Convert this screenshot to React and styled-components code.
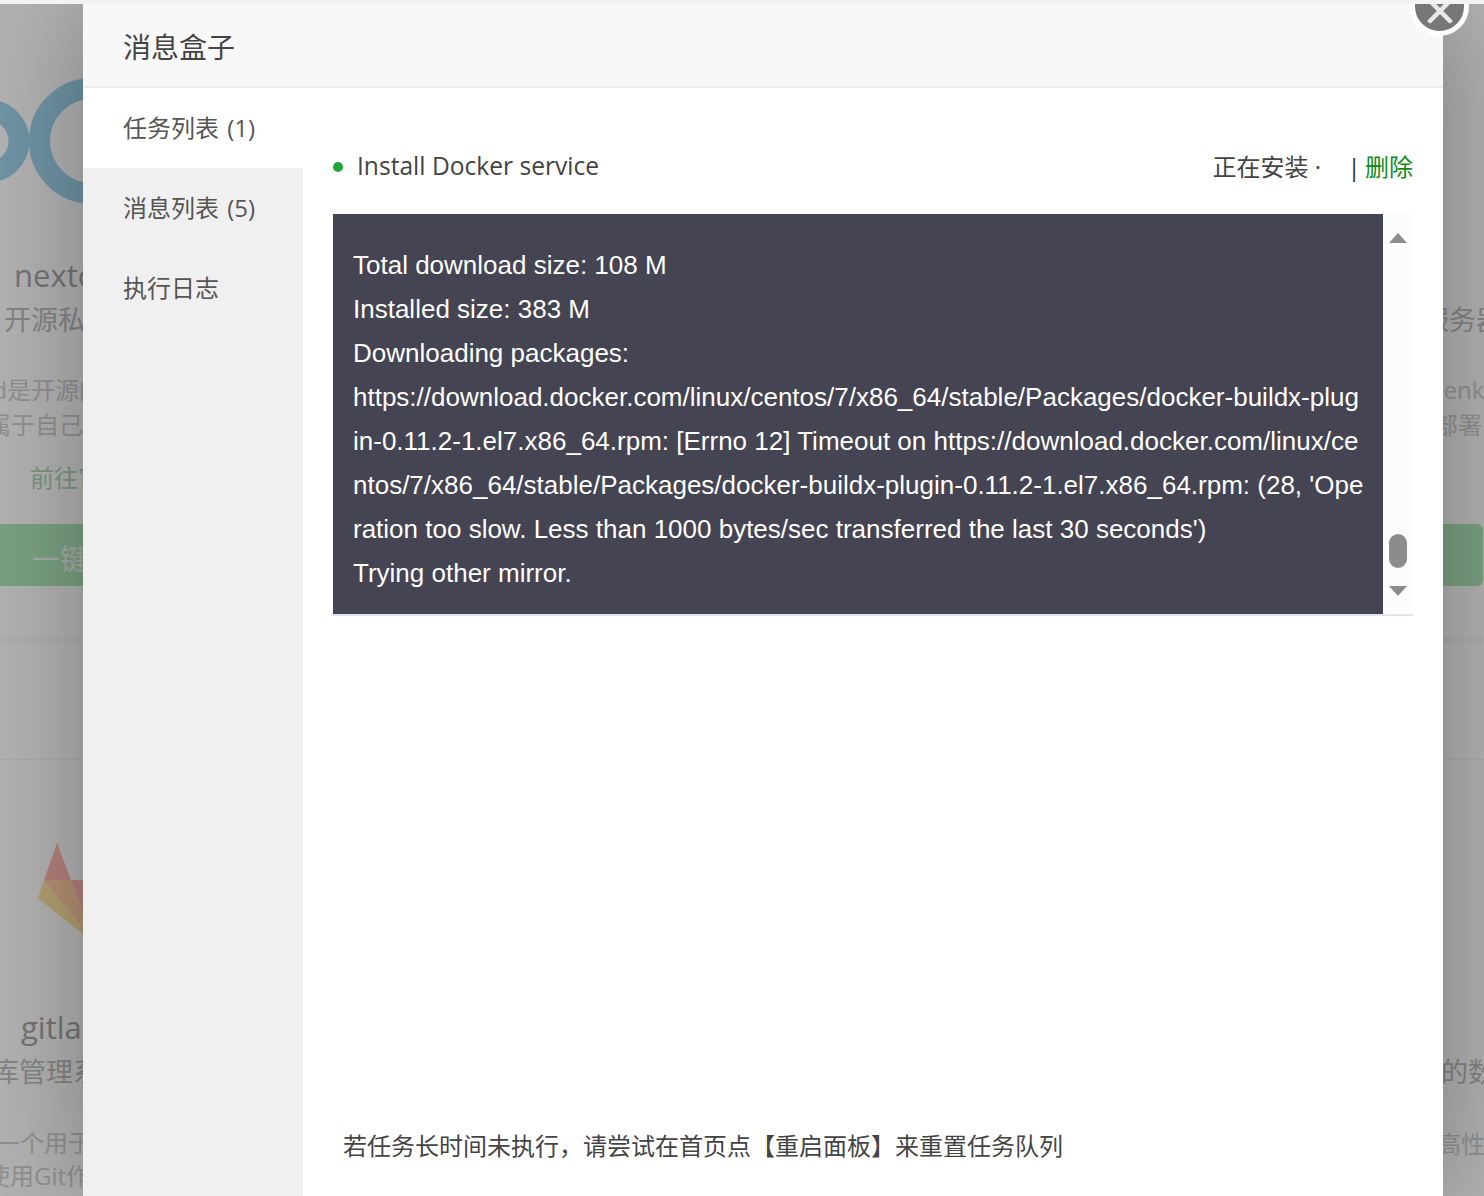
import React from "react";
import styled, { createGlobalStyle } from "styled-components";

const SANS = `"Open Sans", "Noto Sans CJK SC", sans-serif`;

const GlobalStyle = createGlobalStyle`
  html, body {
    margin: 0;
    height: 100%;
    overflow: hidden;
    background: #f3f3f3;
    font-family: ${SANS};
  }
`;

const Page = styled.div`
  height: 1196px;
  padding-top: 4px;
  box-sizing: border-box;
`;

const Stage = styled.div`
  position: relative;
  height: 1192px;
  overflow: hidden;
  background: #fff;
`;

// the software store page behind the dialog
const Store = styled.div`
  display: flex;
  justify-content: space-between;
  padding-right: 1px;
`;

const Column = styled.div`
  width: 400px;
`;

const Card = styled.div`
  height: ${(p) => p.$height}px;
  padding-top: ${(p) => p.$top}px;
  box-sizing: border-box;
`;

const Logo = styled.svg`
  display: block;
  width: 200px;
  height: ${(p) => p.$height}px;
`;

const Line = styled.div`
  margin-top: ${(p) => p.$gap || 0}px;
  margin-left: ${(p) => p.$x || 0}px;
  white-space: nowrap;
`;

const Name = styled(Line)`
  font-size: 31px;
  line-height: 40px;
  color: #a6a6a6;
`;

const Sub = styled(Line)`
  font-size: 27px;
  line-height: 44px;
  color: #bdbdbd;
`;

const Desc = styled(Line)`
  font-size: 24px;
  line-height: 35px;
  color: #cfcfcf;
`;

const GoLink = styled(Line)`
  font-size: 24px;
  line-height: 36px;
  color: #b3d6b8;
`;

const InstallButton = styled.div`
  height: 58px;
  margin-top: ${(p) => p.$gap}px;
  margin-left: ${(p) => p.$bleed || 0}px;
  padding: 4px 0 0 ${(p) => 32 - (p.$bleed || 0)}px;
  border-radius: 6px;
  background: #afe6b9;
  color: #f0f5f0;
  font-size: 28px;
  line-height: 62px;
`;

const Band = styled.div`
  height: 8px;
  margin-top: 50px;
  background: #fafafa;
`;

const Rule = styled.div`
  height: 1px;
  margin-top: 114px;
  background: #f4f4f4;
`;

const Shade = styled.div`
  position: absolute;
  inset: 0;
  background: rgba(0, 0, 0, 0.3);
`;

// dialog
const Dialog = styled.div`
  position: absolute;
  top: 0;
  left: 83px;
  width: 1360px;
  height: 1192px;
  display: flex;
  flex-direction: column;
  background: #fff;
  box-shadow: 1px 1px 100px rgba(0, 0, 0, 0.3);
`;

const DialogTitle = styled.div`
  flex: none;
  height: 82px;
  padding-left: 40px;
  background: #f8f8f8;
  border-bottom: 2px solid #eeeeee;
  color: #444;
  font-size: 28px;
  line-height: 86px;
`;

const CloseButton = styled.button`
  position: absolute;
  top: -27px;
  right: -26px;
  width: 59px;
  height: 59px;
  padding: 0;
  display: flex;
  align-items: center;
  justify-content: center;
  border: 5px solid #fff;
  border-radius: 50%;
  box-sizing: border-box;
  background: #777;
  svg {
    width: 30px;
    height: 30px;
    margin-top: 8px;
  }
`;

const DialogBody = styled.div`
  flex: 1;
  display: flex;
  min-height: 0;
`;

const Sidebar = styled.div`
  flex: none;
  width: 220px;
  background: #f0f0f0;
`;

const Tab = styled.div`
  height: 80px;
  padding-left: 40px;
  background: ${(p) => (p.$active ? "#fff" : "transparent")};
  color: #555;
  font-size: 24px;
  line-height: 80px;
  word-spacing: 2px;
`;

const Content = styled.div`
  flex: 1;
  display: flex;
  flex-direction: column;
  padding: 60px 30px 32px;
  min-width: 0;
`;

const TaskRow = styled.div`
  display: flex;
  align-items: center;
  height: 38px;
  color: #444;
`;

const Dot = styled.span`
  width: 10px;
  height: 10px;
  margin: 0 14px 0 0;
  border-radius: 50%;
  background: #20a53a;
`;

const TaskName = styled.span`
  flex: 1;
  padding-bottom: 3px;
  font-size: 24.6px;
`;

const TaskState = styled.span`
  width: 135px;
  padding-bottom: 3px;
  font-size: 24px;
  color: #444;
`;

const Remove = styled.span`
  padding-bottom: 3px;
  font-size: 24px;
  color: #333;
  word-spacing: -2px;
  em {
    font-style: normal;
    color: #0f8a1a;
  }
`;

const LogBox = styled.div`
  display: flex;
  height: 400px;
  margin-top: 28px;
  border-bottom: 2px solid #e4e2ee;
`;

const Log = styled.div`
  flex: 1;
  padding: 29px 19px 0 20px;
  overflow: hidden;
  background: #444452;
  color: #fff;
  font-family: "Liberation Sans", Arial, sans-serif;
  font-size: 26px;
  line-height: 44px;
  word-break: break-all;
`;

const ScrollTrack = styled.div`
  flex: none;
  width: 30px;
  display: flex;
  flex-direction: column;
  align-items: center;
  padding: 19px 0 18px;
  box-sizing: border-box;
  background: #fcfcfc;
`;

const Arrow = styled.span`
  width: 0;
  height: 0;
  border-left: 9px solid transparent;
  border-right: 9px solid transparent;
  border-${(p) => (p.$down ? "top" : "bottom")}: 10px solid #8c8c8c;
`;

const Thumb = styled.span`
  width: 18px;
  height: 34px;
  margin: auto 0 18px;
  border-radius: 9px;
  background: #8c8c8c;
`;

const Hint = styled.div`
  margin-top: auto;
  padding-left: 10px;
  color: #444;
  font-size: 24px;
  line-height: 36px;
`;

const logLines = [
  "Total download size: 108 M",
  "Installed size: 383 M",
  "Downloading packages:",
  "https://download.docker.com/linux/centos/7/x86_64/stable/Packages/docker-buildx-plugin-0.11.2-1.el7.x86_64.rpm: [Errno 12] Timeout on https://download.docker.com/linux/centos/7/x86_64/stable/Packages/docker-buildx-plugin-0.11.2-1.el7.x86_64.rpm: (28, 'Operation too slow. Less than 1000 bytes/sec transferred the last 30 seconds')",
  "Trying other mirror.",
];

const tabs = ["任务列表 (1)", "消息列表 (5)", "执行日志"];

const App = () => {
  return (
    <Page>
      <GlobalStyle />
      <Stage>
        <Store>
          <Column>
            <Card $height={641} $top={74}>
              <Logo $height={126} viewBox="0 0 200 126">
                <circle cx="92" cy="63" r="52.5" fill="none" stroke="#9fd3ec" strokeWidth="21" />
                <circle cx="-12" cy="63" r="31" fill="none" stroke="#9fd3ec" strokeWidth="21" />
              </Logo>
              <Name $gap={51} $x={14}>nextcloud</Name>
              <Sub $gap={3} $x={4}>开源私有云盘</Sub>
              <Desc $gap={30} $x={-107}>Nextcloud是开源的云存储</Desc>
              <Desc $x={-13}>属于自己的私有网盘</Desc>
              <GoLink $gap={18} $x={30}>前往官网</GoLink>
              <InstallButton $gap={28} $bleed={-12}>一键部署</InstallButton>
              <Band />
            </Card>
            <Rule />
            <Card $height={436} $top={79}>
              <Logo $height={110} viewBox="0 0 200 110">
                <polygon points="57,4 44,41 71,41" fill="#ffb8b0" />
                <polygon points="44,41 71,41 95,105" fill="#ffcea5" />
                <polygon points="44,41 38,59 95,105" fill="#ffe2a2" />
                <polygon points="71,41 120,41 95,105" fill="#ffb8b0" />
              </Logo>
              <Name $gap={58} $x={21}>gitlab</Name>
              <Sub $gap={3} $x={-8}>库管理系统</Sub>
              <Desc $gap={31} $x={-4}>一个用于仓库管理</Desc>
              <Desc $gap={-2} $x={-14}>使用Git作为工具</Desc>
            </Card>
          </Column>
          <Column>
            <Card $height={641} $top={200}>
              <Sub $gap={94} $x={339}>服务器</Sub>
              <Desc $gap={30} $x={354}>Jenkins</Desc>
              <Desc $x={351}>部署</Desc>
              <InstallButton $gap={82} />
              <Band />
            </Card>
            <Rule />
            <Card $height={436} $top={0}>
              <Sub $gap={290} $x={358}>的数据</Sub>
              <Desc $gap={32} $x={354}>高性能</Desc>
            </Card>
          </Column>
        </Store>
        <Shade />
        <Dialog>
          <DialogTitle>消息盒子</DialogTitle>
          <CloseButton>
            <svg viewBox="0 0 30 30">
              <path d="M5 5 L25 25 M25 5 L5 25" stroke="#e8e8e8" strokeWidth="4.5" strokeLinecap="round" />
            </svg>
          </CloseButton>
          <DialogBody>
            <Sidebar>
              {tabs.map((tab, i) => (
                <Tab key={tab} $active={i === 0}>{tab}</Tab>
              ))}
            </Sidebar>
            <Content>
              <TaskRow>
                <Dot />
                <TaskName>Install Docker service</TaskName>
                <TaskState>正在安装 ·</TaskState>
                <Remove>| <em>删除</em></Remove>
              </TaskRow>
              <LogBox>
                <Log>
                  {logLines.map((line) => (
                    <div key={line}>{line}</div>
                  ))}
                </Log>
                <ScrollTrack>
                  <Arrow />
                  <Thumb />
                  <Arrow $down />
                </ScrollTrack>
              </LogBox>
              <Hint>若任务长时间未执行，请尝试在首页点【重启面板】来重置任务队列</Hint>
            </Content>
          </DialogBody>
        </Dialog>
      </Stage>
    </Page>
  );
};

export default App;
